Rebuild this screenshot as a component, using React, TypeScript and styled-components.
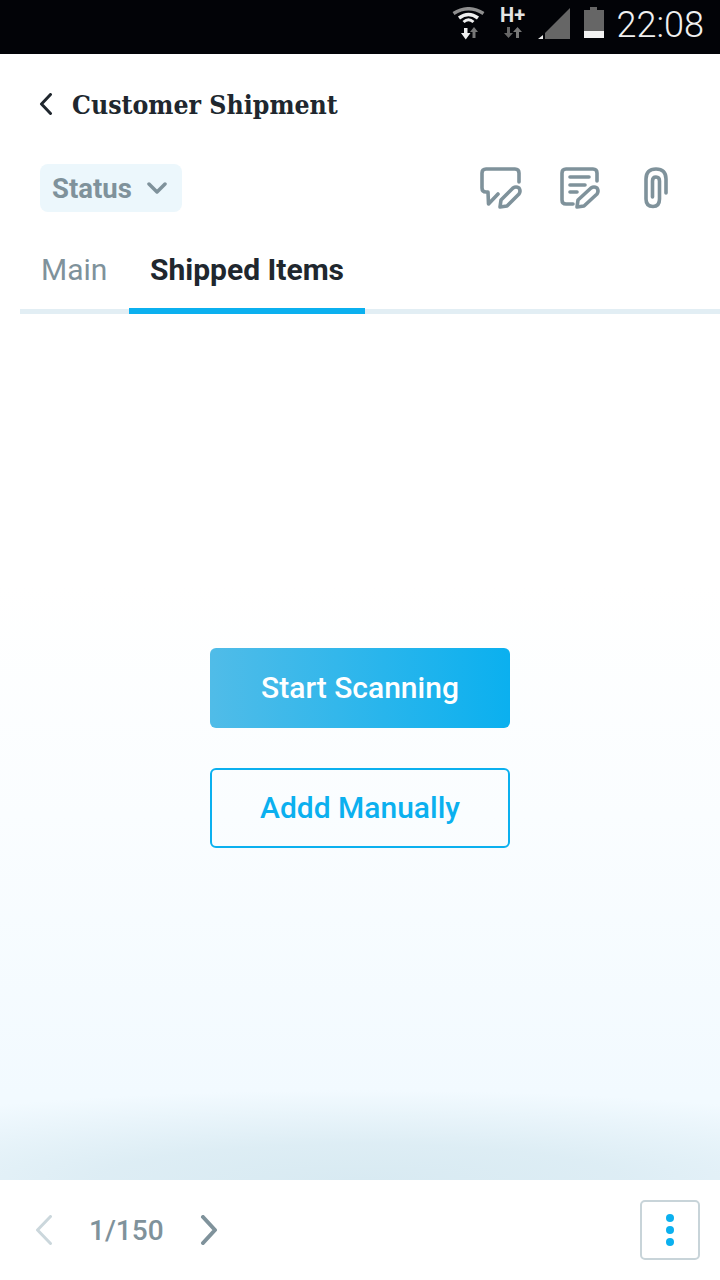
import React from 'react';
import styled, { createGlobalStyle } from 'styled-components';

const Global = createGlobalStyle`
  html, body { margin: 0; padding: 0; background: #fff; }
  * { box-sizing: border-box; }
`;

const Screen = styled.div`
  width: 720px;
  height: 1280px;
  display: flex;
  flex-direction: column;
  font-family: Roboto, sans-serif;
  overflow: hidden;
`;

const StatusBar = styled.div`
  height: 54px;
  flex: none;
  background: #020307;
  display: flex;
  align-items: flex-start;
  justify-content: flex-end;
  padding-right: 16px;
  color: #e4e4e4;
`;

const WifiIcon = styled.svg`
  display: block;
  flex: none;
  margin-top: 7px;
`;

const NetworkType = styled.div`
  width: 26px;
  margin: 6px 0 0 15px;
  display: flex;
  flex-direction: column;
  align-items: center;
  font-size: 20px;
  font-weight: 700;
  line-height: 18px;
`;

const SignalIcon = styled.svg`
  display: block;
  flex: none;
  margin: 8px 0 0 12px;
`;

const BatteryIcon = styled.svg`
  display: block;
  flex: none;
  margin: 7px 0 0 14px;
`;

const Clock = styled.span`
  font-size: 36px;
  font-weight: 300;
  margin-left: 13px;
  margin-top: -2px;
  line-height: 54px;
  color: #f0f0f0;
`;

const Header = styled.div`
  height: 100px;
  flex: none;
  background: #fff;
  display: flex;
  align-items: center;
  padding-left: 39px;
  gap: 19px;
`;

const Title = styled.h1`
  margin: 0;
  font-family: 'DejaVu Serif', serif;
  font-stretch: condensed;
  font-size: 26.4px;
  font-weight: 700;
  color: #20272e;
`;

const ToolRow = styled.div`
  height: 48px;
  margin-top: 10px;
  flex: none;
  background: #fff;
  display: flex;
  align-items: center;
  justify-content: space-between;
  padding: 0 52px 0 40px;
`;

const StatusChip = styled.div`
  width: 142px;
  height: 48px;
  border-radius: 8px;
  background: #ecf7fc;
  color: #7f929b;
  font-size: 27.5px;
  font-weight: 700;
  display: flex;
  align-items: center;
  gap: 15px;
  padding: 1px 0 0 12px;
`;

const Actions = styled.div`
  display: flex;
  align-items: center;
  gap: 38px;
`;

const Tabs = styled.div`
  height: 102px;
  flex: none;
  margin-left: 20px;
  display: flex;
  background: #fff;
  position: relative;
  &::after {
    content: '';
    position: absolute;
    left: 0;
    right: 0;
    bottom: 0;
    height: 5px;
    background: #e2eef4;
  }
`;

const Tab = styled.div<{ $active?: boolean }>`
  position: relative;
  z-index: 1;
  width: ${p => (p.$active ? '236px' : '109px')};
  padding-left: 21px;
  height: 102px;
  line-height: 116px;
  font-size: 30px;
  font-weight: ${p => (p.$active ? 700 : 400)};
  color: ${p => (p.$active ? '#20272e' : '#7f929b')};
  border-bottom: ${p => (p.$active ? '6px solid #0bb0ef' : 'none')};
  white-space: nowrap;
`;

const Body = styled.div`
  flex: 1;
  padding-top: 334px;
  display: flex;
  flex-direction: column;
  align-items: center;
  gap: 40px;
  background:
    radial-gradient(ellipse 92% 90px at 50% 100%, #d8eaf2 0%, rgba(216, 234, 242, 0.8) 40%, rgba(216, 234, 242, 0) 100%),
    linear-gradient(to bottom, #fff 0, #fff 270px, #fafdff 500px, #f2faff 780px);
`;

const Button = styled.button<{ $solid?: boolean }>`
  width: 300px;
  height: 80px;
  border-radius: 6px;
  font-family: Roboto, sans-serif;
  font-size: 30px;
  font-weight: 500;
  padding: 0 0 2px;
  color: ${p => (p.$solid ? '#fff' : '#0bb0ef')};
  background: ${p => (p.$solid ? 'linear-gradient(to right, #50bce8, #0bb0ef)' : 'transparent')};
  border: ${p => (p.$solid ? 'none' : '2px solid #0bb0ef')};
`;

const Footer = styled.div`
  height: 100px;
  flex: none;
  background: #fff;
  display: flex;
  align-items: center;
  padding: 0 20px 0 35px;
`;

const Pager = styled.span`
  font-size: 28px;
  font-weight: 500;
  color: #7f929b;
  margin: 0 36px;
`;

const MoreButton = styled.div`
  margin-left: auto;
  width: 60px;
  height: 60px;
  border: 2px solid #c8d4d9;
  border-radius: 5px;
  display: flex;
  flex-direction: column;
  align-items: center;
  justify-content: center;
  gap: 4px;
`;

const Dot = styled.span`
  width: 8px;
  height: 8px;
  border-radius: 50%;
  background: #0bb0ef;
`;

const Icon = styled.svg`
  display: block;
  flex: none;
`;

const Chevron = ({ dir, color, width, height, sw }: { dir: 'left' | 'right'; color: string; width: number; height: number; sw: number }) => (
  <Icon width={width} height={height} viewBox={`0 0 ${width} ${height}`} fill="none">
    <path
      d={dir === 'left'
        ? `M${width - sw / 2 - 1} ${sw / 2} L${sw / 2 + 1} ${height / 2} L${width - sw / 2 - 1} ${height - sw / 2}`
        : `M${sw / 2 + 1} ${sw / 2} L${width - sw / 2 - 1} ${height / 2} L${sw / 2 + 1} ${height - sw / 2}`}
      stroke={color}
      strokeWidth={sw}
      strokeLinecap="round"
      strokeLinejoin="round"
    />
  </Icon>
);

const SmallChevron = () => (
  <Icon width={20} height={13} viewBox="0 0 20 13" fill="none">
    <path d="M2 2 L10 10 L18 2" stroke="#7f929b" strokeWidth="3.5" strokeLinecap="round" strokeLinejoin="round" />
  </Icon>
);

const ACTION = { stroke: '#7f929b', strokeWidth: 3.6, strokeLinecap: 'round', strokeLinejoin: 'round', fill: 'none' } as const;

export default function App() {
  return (
    <Screen>
      <Global />
      <StatusBar>
        <WifiIcon width={33} height={33} viewBox="0 0 33 33">
          <path d="M1.500 6.500 Q16.500 -3 31.500 6.500" stroke="#8e8e8e" strokeWidth="3.500" fill="none" />
          <path d="M7 11 Q16.500 4 26 11" stroke="#eee" strokeWidth="3.500" fill="none" />
          <path d="M11.500 15 Q16.500 10.500 21.500 15" stroke="#eee" strokeWidth="3" fill="none" />
          <path d="M12 21 h3.500 v5 h3 l-4.750 6.500 l-4.750 -6.500 h3 z" fill="#eee" />
          <path d="M20.500 31 v-6 h-2.500 l4 -5 l4 5 h-2.500 v6 z" fill="#777" />
        </WifiIcon>
        <NetworkType>
          H+
          <Icon width={18} height={11} viewBox="0 0 18 11" style={{ marginTop: 3 }}>
            <path d="M3 0 h3 v6 h3 l-4.500 5 l-4.500 -5 h3 z" fill="#666" />
            <path d="M12 11 v-6 h-3 l4.500 -5 l4.500 5 h-3 v6 z" fill="#777" />
          </Icon>
        </NetworkType>
        <SignalIcon width={32} height={32} viewBox="0 0 32 32">
          <path d="M32 0 V31 H7 V25 Z" fill="#666" />
          <path d="M5 27 V31 H0 Z" fill="#eee" />
        </SignalIcon>
        <BatteryIcon width={20} height={31} viewBox="0 0 20 31">
          <path d="M6 0 H13 V3 H20 V24 H0 V3 H6 Z" fill="#666" />
          <rect x="0" y="24" width="20" height="7" fill="#f2f2f2" />
        </BatteryIcon>
        <Clock>22:08</Clock>
      </StatusBar>
      <Header>
        <Chevron dir="left" color="#20272e" width={14} height={22} sw={3} />
        <Title>Customer Shipment</Title>
      </Header>
      <ToolRow>
        <StatusChip>
          Status
          <SmallChevron />
        </StatusChip>
        <Actions>
          <Icon width={42} height={42} viewBox="0 0 42 42" fill="none">
            <path d="M39 15 V6 Q39 2 35 2 H6 Q2 2 2 6 V21 Q2 25 6 25 H8 L8.500 37 L18 27" {...ACTION} />
            <path d="M20 40 L21 33 L33 21 Q36 19 39 21 Q41 24 39 27 L27 39 Z" {...ACTION} />
          </Icon>
          <Icon width={46} height={42} viewBox="0 0 46 42" fill="none">
            <path d="M37 14 V6 Q37 2 33 2 H6 Q2 2 2 6 V33 Q2 37 6 37 H13" {...ACTION} />
            <path d="M10 10 H29 M10 18 H25 M10 25 H17" {...ACTION} />
            <path d="M17 40 L18 33 L31 21 Q34 19 37 21 Q39 24 37 27 L24 39 Z" {...ACTION} />
          </Icon>
          <Icon width={24} height={42} viewBox="0 0 24 42" fill="none">
            <path d="M22 26 V12 Q22 2 12 2 Q2 2 2 12 V32 Q2 39.500 9 39.500 Q15.500 39.500 15.500 32 V14 Q15.500 10 12 10 Q8.500 10 8.500 14 V30" {...ACTION} />
          </Icon>
        </Actions>
      </ToolRow>
      <Tabs>
        <Tab>Main</Tab>
        <Tab $active>Shipped Items</Tab>
      </Tabs>
      <Body>
        <Button $solid>Start Scanning</Button>
        <Button>Addd Manually</Button>
      </Body>
      <Footer>
        <Chevron dir="left" color="#cbd7dc" width={18} height={30} sw={3} />
        <Pager>1/150</Pager>
        <Chevron dir="right" color="#7f929b" width={18} height={30} sw={4} />
        <MoreButton>
          <Dot />
          <Dot />
          <Dot />
        </MoreButton>
      </Footer>
    </Screen>
  );
}
